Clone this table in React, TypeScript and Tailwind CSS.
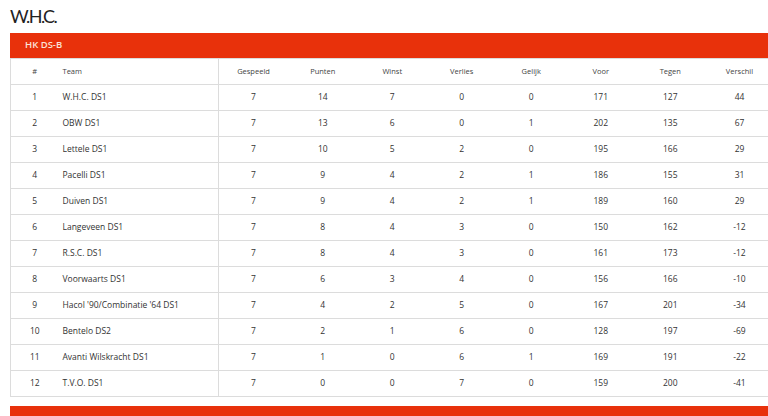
const rows: [number, string, number, number, number, number, number, number, number, number][] = [
  [1, 'W.H.C. DS1', 7, 14, 7, 0, 0, 171, 127, 44],
  [2, 'OBW DS1', 7, 13, 6, 0, 1, 202, 135, 67],
  [3, 'Lettele DS1', 7, 10, 5, 2, 0, 195, 166, 29],
  [4, 'Pacelli DS1', 7, 9, 4, 2, 1, 186, 155, 31],
  [5, 'Duiven DS1', 7, 9, 4, 2, 1, 189, 160, 29],
  [6, 'Langeveen DS1', 7, 8, 4, 3, 0, 150, 162, -12],
  [7, 'R.S.C. DS1', 7, 8, 4, 3, 0, 161, 173, -12],
  [8, 'Voorwaarts DS1', 7, 6, 3, 4, 0, 156, 166, -10],
  [9, "Hacol '90/Combinatie '64 DS1", 7, 4, 2, 5, 0, 167, 201, -34],
  [10, 'Bentelo DS2', 7, 2, 1, 6, 0, 128, 197, -69],
  [11, 'Avanti Wilskracht DS1', 7, 1, 0, 6, 1, 169, 191, -22],
  [12, 'T.V.O. DS1', 7, 0, 0, 7, 0, 159, 200, -41],
]

const stats = ['Gespeeld', 'Punten', 'Winst', 'Verlies', 'Gelijk', 'Voor', 'Tegen', 'Verschil']

export default function App() {
  return (
    <div className="w-[768px] h-[416px] overflow-hidden bg-white text-[#333]" style={{ fontFamily: '"Open Sans", "Noto Sans", sans-serif' }}>
      <h1 className="pl-[10px] pt-[3px] h-[33px] text-[18px] leading-[26px] tracking-[-1.6px] text-[#222] font-normal" style={{ fontFamily: 'Lato, sans-serif' }}>
        W.H.C.
      </h1>
      <div className="ml-[10px] w-[764px]">
        <div className="h-[25px] bg-[#e8310b] flex items-center pl-[15px] text-[9.5px] font-semibold text-[#fbe3d8]">
          HK DS-B
        </div>
        <table className="w-[764px] table-fixed border-collapse border border-[#dcdcdc]">
          <colgroup>
            <col className="w-[48px]" />
            <col className="w-[160px]" />
            {stats.map((s) => (
              <col key={s} className="w-[69.5px]" />
            ))}
          </colgroup>
          <thead>
            <tr className="h-[26px] text-[7.5px] text-[#444]">
              <th className="font-normal text-center">#</th>
              <th className="font-normal text-left pl-[4px] border-r border-[#dcdcdc]">Team</th>
              {stats.map((s) => (
                <th key={s} className="font-normal text-center">{s}</th>
              ))}
            </tr>
          </thead>
          <tbody>
            {rows.map((r) => (
              <tr key={r[0]} className="h-[26px] text-[8.5px] border-t border-[#dcdcdc]">
                <td className="text-center">{r[0]}</td>
                <td className="text-left pl-[4px] border-r border-[#dcdcdc]">{r[1]}</td>
                {r.slice(2).map((v, i) => (
                  <td key={i} className="text-center">{v}</td>
                ))}
              </tr>
            ))}
          </tbody>
        </table>
        <div className="mt-[9px] h-[20px] bg-[#e8310b]" />
      </div>
    </div>
  )
}
